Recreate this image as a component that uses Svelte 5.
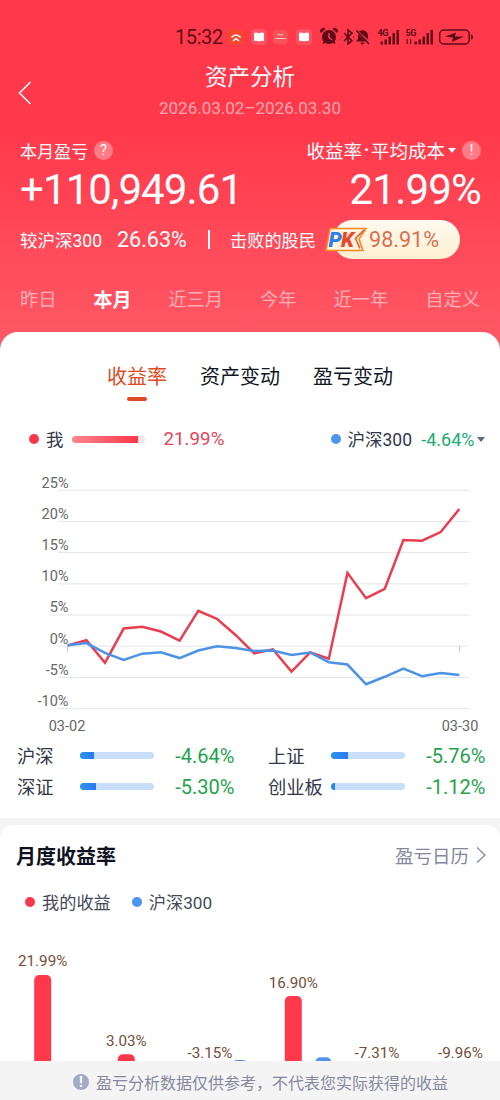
<script>
    const periods = ['昨日', '本月', '近三月', '今年', '近一年', '自定义'];
    const views = ['收益率', '资产变动', '盈亏变动'];
    let period = $state('本月');
    let view = $state('收益率');

    const mine = [0.1, 0.96, -2.67, 2.83, 3.1, 2.35, 0.9, 5.66, 4.38, 1.8, -1.17,
        -0.5, -4.06, -1.0, -2.0, 11.75, 7.7, 9.2, 17.0, 16.9, 18.3, 21.99];
    const market = [0.15, 0.5, -1.07, -2.2, -1.2, -0.96, -1.9, -0.7, 0, -0.3, -0.75,
        -0.7, -1.4, -1.0, -2.56, -2.94, -6.1, -4.9, -3.6, -4.8, -4.3, -4.6];
    const ticks = [25, 20, 15, 10, 5, 0, -5, -10];

    const x_at = (index) => 67.7 + index * 18.65;
    const y_at = (value) => 176.2 - value * 6.24;
    const to_points = (values) => values.map((v, i) => `${x_at(i)},${y_at(v)}`).join(' ');

    const indices = [
        {name: '沪深', value: '-4.64%', fill: 19},
        {name: '上证', value: '-5.76%', fill: 23},
        {name: '深证', value: '-5.30%', fill: 22},
        {name: '创业板', value: '-1.12%', fill: 5},
    ];

    // the value labels are centred on x, the blue bar stands right of the red one
    const months = [
        {x: 42.7, label: '21.99%', top: 45, text_y: 36},
        {x: 126.3, label: '3.03%', top: 124.3, text_y: 115.5},
        {x: 210, label: '-3.15%', text_y: 128.3, market_top: 130},
        {x: 293.3, label: '16.90%', top: 66, text_y: 57.5, market_top: 127.2},
        {x: 377, label: '-7.31%', text_y: 128.3},
        {x: 460.5, label: '-9.96%', text_y: 128.3},
    ];
</script>

<div class="page">
    <div class="status">
        <span class="time">15:32</span>
        <svg class="apps" width="84" height="18" viewBox="0 0 84 18">
            <rect x="0" y="1" width="16" height="16" rx="4" fill="#f4472f"/>
            <path d="M3.500 9.500Q8 4.500 12.500 9.500M5 13l3-2.500 3 2.500" fill="none" stroke="#fff" stroke-width="1.600"/>
            <rect x="23" y="1" width="16" height="16" rx="4" fill="#ff5262"/>
            <path d="M26 5q3-1 5 .5Q33 4 36 5v8q-3-.7-5 .5-2-1.200-5-.5z" fill="#fff"/>
            <rect x="45" y="2" width="15" height="14" rx="4" fill="#f65257"/>
            <path d="M50 6q2.500 2 5 0M47 10.500h11" fill="none" stroke="#ffc5c5" stroke-width="1.200"/>
            <rect x="68" y="1" width="16" height="16" rx="4" fill="#ff5262"/>
            <path d="M71 5q3-1 5 .5Q78 4 81 5v8q-3-.7-5 .5-2-1.200-5-.5z" fill="#fff"/>
        </svg>
        <svg class="system" width="154" height="20" viewBox="0 0 154 20">
            <g fill="#5c0c18">
                <circle cx="9" cy="10" r="7"/>
                <path d="M1 6a3 3 0 0 1 4.500-4zM17 6a3 3 0 0 0-4.500-4zM3.500 14l-1 3 3-1zM14.500 14l1 3-3-1z"/>
                <path d="M43 3.500a5 5 0 0 1 5 5v3.500l1 1.500L39 4.500q1-1 3-1.200zM38 7v5l-2 2.500h10zM40.500 15.500h4q-.5 2-2 2t-2-2z"/>
                <path d="M60.500 14.500h2.400v3h-2.400zM64.500 12.500h2.400v5h-2.400zM68.500 9.500h2.400v8h-2.400zM72.500 6h2.400v11.500h-2.400zM76.500 3h2.400v14.500h-2.400z"/>
                <path d="M94.500 14.500h2.400v3h-2.400zM98.500 12.500h2.400v5h-2.400zM102.500 9.500h2.400v8h-2.400zM106.500 6h2.400v11.500h-2.400zM110.500 3h2.400v14.500h-2.400z"/>
                <path d="M86.500 12h1.200v5h-1.200zM90 12h1.200v5h-1.200z"/>
                <path d="M125 9.500l11-4-1 4h9l-12 5.500 1-4.500z"/>
                <path d="M151 7.500q2 0 2 2.500t-2 2.500z"/>
            </g>
            <path d="M9 6v4.500l3 2.500" fill="none" stroke="#ff3a49" stroke-width="1.500"/>
            <path d="M24 6l8 8-4 3V3l4 3-8 8M33.500 10h.5M22 10h.5" fill="none" stroke="#5c0c18" stroke-width="1.600"/>
            <path d="M36.500 3.500l12.500 13.500" stroke="#5c0c18" stroke-width="1.500"/>
            <rect x="119.700" y="3" width="29.500" height="14" rx="4" fill="none" stroke="#5c0c18" stroke-width="1.500"/>
            <text x="57.500" y="9" class="net">4G</text>
            <text x="85.500" y="9" class="net">5G</text>
        </svg>
    </div>

    <div class="title-row">
        <svg width="16" height="26" viewBox="0 0 16 26">
            <path d="M13.500 2L2.500 13l11 11" fill="none" stroke="#fff" stroke-width="1.500"/>
        </svg>
        <div class="titles">
            <h1>资产分析</h1>
            <div class="date">2026.03.02–2026.03.30</div>
        </div>
    </div>

    <div class="labels">
        <span>本月盈亏<i class="badge">?</i></span>
        <span class="cost">收益率<b>·</b>平均成本<i class="caret"></i><i class="badge">!</i></span>
    </div>
    <div class="totals">
        <span class="amount">+110,949.61</span>
        <span class="rate">21.99%</span>
    </div>
    <div class="compare">
        <span class="against">较沪深300</span>
        <span class="versus">26.63%</span>
        <i class="divider"></i>
        <span class="beaten">击败的股民</span>
        <span class="pill">
            98.91%
            <svg class="pk" width="42" height="26" viewBox="0 0 42 26">
                <path d="M5 1.500h36l-7 10.500 4 11.500H1z" fill="#fff4dd" stroke="#f58a22" stroke-width="1.600"/>
                <path d="M39 3l-8.500 8.500 4.500 10" fill="none" stroke="#e8552b" stroke-width="1.500"/>
                <text x="3.500" y="20" class="pk-p">P</text>
                <text x="16" y="20" class="pk-k">K</text>
            </svg>
        </span>
    </div>

    <nav class="periods">
        {#each periods as name}
            <button class:active={name === period} onclick={() => period = name}>{name}</button>
        {/each}
    </nav>

    <section class="sheet">
        <div class="views">
            {#each views as name}
                <button class:active={name === view} onclick={() => view = name}>{name}</button>
            {/each}
        </div>

        <div class="legend">
            <i class="dot red"></i>
            <span class="me">我</span>
            <i class="my-bar"></i>
            <span class="my-rate">21.99%</span>
            <i class="dot blue"></i>
            <span class="base">沪深300</span>
            <span class="base-rate">-4.64%</span>
            <i class="caret dark"></i>
        </div>

        <svg class="chart" width="500" height="270" viewBox="0 0 500 270">
            {#each ticks as tick, index}
                <line x1={tick === 5 ? 50 : 58} x2="469" y1={y_at(tick)} y2={y_at(tick)} stroke="#e3e5e8"/>
                <text x="68.500" y={17.5 + index * 31.2} text-anchor="end">{tick}%</text>
            {/each}
            <path d="M67.500 176v6M459.500 176v6" stroke="#c3cad4"/>
            <polyline points={to_points(mine)} stroke="#e83e50"/>
            <polyline points={to_points(market)} stroke="#4c93e6"/>
            <text x="67" y="261" text-anchor="middle">03-02</text>
            <text x="460" y="261" text-anchor="middle">03-30</text>
        </svg>

        <div class="indices">
            {#each indices as item}
                <div class="index">
                    <span class="name">{item.name}</span>
                    <i class="track"><i class="fill" style="width: {item.fill}%"></i></i>
                    <span class="value">{item.value}</span>
                </div>
            {/each}
        </div>
    </section>

    <section class="monthly">
        <div class="heading">
            <h2>月度收益率</h2>
            <span>盈亏日历</span>
            <svg width="10" height="18" viewBox="0 0 10 18">
                <path d="M1 1.500L9 9l-8 7.500" fill="none" stroke="#85879c" stroke-width="1.200"/>
            </svg>
        </div>
        <div class="keys">
            <i class="dot red"></i><span>我的收益</span>
            <i class="dot blue"></i><span>沪深300</span>
        </div>
        <svg class="bars" width="500" height="131" viewBox="0 0 500 131">
            {#each months as month}
                {#if month.top}
                    <rect x={month.x - 8.5} y={month.top} width="17" height="120" rx="5" fill="#ff394b"/>
                {/if}
                {#if month.market_top}
                    <rect x={month.x + 22} y={month.market_top} width="16" height="30" rx="5" fill="#5394f0"/>
                {/if}
                <text x={month.x} y={month.text_y} text-anchor="middle">{month.label}</text>
            {/each}
        </svg>
    </section>

    <footer>
        <i class="notice">!</i>
        <span>盈亏分析数据仅供参考，不代表您实际获得的收益</span>
    </footer>
</div>

<style>
    :global(body) {
        background: #f4f4f4;
    }
    .page {
        width: 500px;
        height: 1100px;
        overflow: hidden;
        display: flex;
        flex-direction: column;
        font-family: Roboto, "Noto Sans CJK SC", sans-serif;
        color: #fff;
        background: linear-gradient(#ff384a 0, #ff394b 130px, #ff5967 350px, #f4f4f4 350px);
    }
    .page > * {
        flex: none;
        box-sizing: border-box;
    }
    i {
        font-style: normal;
        flex: none;
    }
    svg {
        display: block;
        flex: none;
    }
    button {
        border: none;
        background: none;
        padding: 0;
        font: inherit;
        color: inherit;
        white-space: nowrap;
    }

    .status {
        height: 56px;
        padding: 18px 0 0 175px;
        display: flex;
        align-items: center;
        color: #5c0c18;
    }
    .time {
        width: 53px;
        font-size: 20px;
        letter-spacing: -0.4px;
    }
    .system {
        margin-left: 8px;
    }
    .net {
        font-size: 9px;
        font-weight: 700;
        fill: #5c0c18;
        letter-spacing: -0.500px;
    }

    .title-row {
        height: 74px;
        display: flex;
        align-items: center;
        padding-left: 17px;
    }
    .titles {
        width: 434px;
        padding-bottom: 5px;
        text-align: center;
    }
    h1 {
        margin: 0;
        font-size: 22.500px;
        font-weight: 400;
        line-height: 36px;
    }
    .date {
        font-size: 17px;
        line-height: 27px;
        color: #ffa8af;
    }

    .labels {
        height: 40px;
        padding: 0 19px 0 20px;
        display: flex;
        justify-content: space-between;
        align-items: center;
        font-size: 17px;
    }
    .labels span {
        display: flex;
        align-items: center;
    }
    .labels .cost {
        font-size: 18.500px;
    }
    .cost b {
        width: 9px;
        text-align: center;
    }
    .badge {
        width: 19px;
        height: 19px;
        border-radius: 50%;
        margin-left: 6px;
        background: #ff7b86;
        font-size: 14px;
        line-height: 19px;
        text-align: center;
    }
    .caret {
        border: 4.500px solid transparent;
        border-top: 5.500px solid #fff;
        border-bottom: none;
        margin-left: 3px;
    }
    .totals {
        height: 40px;
        padding: 0 19px 2px 20px;
        display: flex;
        justify-content: space-between;
        align-items: center;
        font-size: 42px;
    }
    .amount {
        letter-spacing: -0.900px;
    }
    .rate {
        letter-spacing: -0.800px;
    }
    .compare {
        height: 60px;
        padding: 0 0 1px 20px;
        display: flex;
        align-items: center;
        font-size: 17.200px;
    }
    .against {
        width: 97px;
        font-size: 17.500px;
    }
    .versus {
        width: 91px;
        font-size: 21.500px;
    }
    .divider {
        width: 1.500px;
        height: 19px;
        margin-right: 20.500px;
        background: #fff;
    }
    .beaten {
        width: 103px;
    }
    .pill {
        position: relative;
        width: 127px;
        height: 39px;
        padding-left: 36px;
        box-sizing: border-box;
        border-radius: 20px;
        background: linear-gradient(#fffaf0, #fff0d2);
        color: #d87050;
        font-size: 21.600px;
        line-height: 40px;
    }
    .pk {
        position: absolute;
        left: -8px;
        top: 7px;
    }
    .pk-p, .pk-k {
        font: italic 900 21px Roboto, sans-serif;
        fill: #2f7de8;
    }
    .pk-k {
        fill: #e8492c;
    }

    .periods {
        height: 62px;
        padding: 0 20px 6px;
        display: flex;
        justify-content: space-between;
        align-items: center;
        font-size: 18.300px;
        color: #ffafb5;
    }
    .periods .active {
        font-size: 19px;
        font-weight: 700;
        color: #fff;
    }

    .sheet {
        height: 486px;
        background: #fff;
        border-radius: 18px 18px 0 0;
        color: #33384a;
    }
    .views {
        height: 69px;
        padding-top: 21px;
        box-sizing: border-box;
        display: flex;
        justify-content: center;
        gap: 33px;
        font-size: 20px;
        color: #111725;
    }
    .views button {
        height: 48px;
        line-height: 48px;
        display: flex;
        flex-direction: column;
        align-items: center;
    }
    .views .active {
        color: #de4a22;
    }
    .views .active::after {
        content: '';
        width: 20px;
        height: 4px;
        flex: none;
        margin-top: -4px;
        border-radius: 2px;
        background: #de4a22;
    }
    .legend {
        height: 76px;
        padding-left: 29px;
        display: flex;
        align-items: center;
        box-sizing: border-box;
        font-size: 17.500px;
    }
    .dot {
        width: 10px;
        height: 10px;
        border-radius: 50%;
    }
    .red {
        background: #f9374b;
    }
    .blue {
        background: #4c94f0;
    }
    .me, .base {
        margin-left: 7px;
        padding-bottom: 2px;
    }
    .my-bar {
        width: 73px;
        height: 7px;
        margin-left: 8px;
        border-radius: 4px;
        background: linear-gradient(90deg, #ff858e, #f9374b 66px, #ffe3e6 66px);
    }
    .my-rate {
        width: 167px;
        margin-left: 19px;
        font-size: 18.800px;
        color: #e64556;
    }
    .base {
        width: 71px;
        white-space: nowrap;
    }
    .base-rate {
        width: 56px;
        text-align: right;
        font-size: 18px;
        color: #20ac73;
    }
    .dark {
        margin-left: 2px;
        border-top-color: #5e6b83;
    }
    .chart {
        margin-top: -7px;
    }
    .chart text {
        font-size: 14.500px;
        fill: #666;
    }
    .chart polyline {
        fill: none;
        stroke-width: 2.500;
    }
    .indices {
        display: grid;
        grid-template-columns: 251px 219px;
        grid-auto-rows: 31px;
        padding-left: 17px;
    }
    .index {
        width: 217.500px;
        display: flex;
        align-items: center;
        font-size: 18.300px;
    }
    .name {
        width: 63px;
        padding-bottom: 2px;
        white-space: nowrap;
    }
    .track {
        width: 74px;
        height: 7px;
        border-radius: 4px;
        overflow: hidden;
        background: #c9defa;
    }
    .fill {
        display: block;
        height: 7px;
        background: linear-gradient(90deg, #2d95ea, #2b78f5);
    }
    .value {
        flex: 1;
        text-align: right;
        font-size: 20px;
        color: #1fa44c;
    }

    .monthly {
        height: 236px;
        margin-top: 7px;
        background: #fff;
        border-radius: 14px 14px 0 0;
        color: #454957;
    }
    .heading {
        height: 60px;
        padding: 0 14px 0 16px;
        display: flex;
        align-items: center;
        font-size: 18.500px;
        color: #85879c;
    }
    h2 {
        flex: 1;
        margin: 0;
        font-size: 20px;
        font-weight: 700;
        color: #10131f;
    }
    .heading svg {
        margin-left: 7px;
    }
    .keys {
        height: 34px;
        padding-left: 25px;
        display: flex;
        align-items: center;
        font-size: 17.200px;
    }
    .keys span {
        margin: 0 21px 0 7px;
        padding-bottom: 2px;
    }
    .bars {
        margin-top: 11px;
    }
    .bars text {
        font-size: 15.200px;
        fill: #754e3a;
    }

    footer {
        height: 39px;
        padding: 3px 0 0 73px;
        display: flex;
        align-items: center;
        background: #f4f4f4;
        font-size: 16px;
        color: #85899f;
    }
    .notice {
        width: 16px;
        height: 16px;
        margin-right: 7px;
        border-radius: 50%;
        background: #a2abc5;
        color: #fff;
        font-size: 14px;
        font-weight: 700;
        line-height: 16px;
        text-align: center;
    }
</style>
